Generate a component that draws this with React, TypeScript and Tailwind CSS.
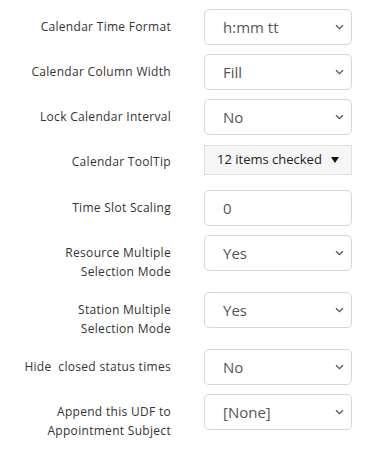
import React from 'react'

type Row = {
  label: string[]
  value: string
  kind: 'select' | 'input' | 'multi'
}

const ROWS: Row[] = [
  { label: ['Calendar Time Format'], value: 'h:mm tt', kind: 'select' },
  { label: ['Calendar Column Width'], value: 'Fill', kind: 'select' },
  { label: ['Lock Calendar Interval'], value: 'No', kind: 'select' },
  { label: ['Calendar ToolTip'], value: '12 items checked', kind: 'multi' },
  { label: ['Time Slot Scaling'], value: '0', kind: 'input' },
  { label: ['Resource Multiple', 'Selection Mode'], value: 'Yes', kind: 'select' },
  { label: ['Station Multiple', 'Selection Mode'], value: 'Yes', kind: 'select' },
  { label: ['Hide  closed status times'], value: 'No', kind: 'select' },
  { label: ['Append this UDF to', 'Appointment Subject'], value: '[None]', kind: 'select' },
]

function Chevron() {
  return (
    <svg width="9" height="6" viewBox="0 0 9 6" className="shrink-0">
      <path d="M1 1.2 L4.5 4.6 L8 1.2" fill="none" stroke="#555" strokeWidth="1.3" />
    </svg>
  )
}

function Control({ row }: { row: Row }) {
  if (row.kind === 'multi') {
    return (
      <div className="h-[37px] pt-px">
        <div className="w-[148px] h-[30px] bg-[#f6f6f6] border border-[#e0e0e0] flex items-center justify-between pl-[12px] pr-[12px]">
          <span className="text-[13px] text-[#222]">{row.value}</span>
          <svg width="8" height="6" viewBox="0 0 8 6">
            <path d="M0 0 H8 L4 6 Z" fill="#111" />
          </svg>
        </div>
      </div>
    )
  }
  return (
    <div className="w-[148px] h-[36px] border border-[#d6d6d6] rounded-[5px] bg-white flex items-center justify-between pl-[18px] pr-[7px]">
      <span className="text-[15px] text-[#555] pt-[1px]">{row.value}</span>
      {row.kind === 'select' && <Chevron />}
    </div>
  )
}

export default function App() {
  return (
    <div className="w-[377px] h-[452px] bg-white pt-[9px]" style={{ fontFamily: '"Open Sans", "Noto Sans", sans-serif' }}>
      {ROWS.map((row, i) => (
        <div key={i} className={`flex ${row.label.length > 1 ? 'mb-[11px]' : 'mb-[9px]'}`}>
          <div className="w-[171px] text-right text-[12px] tracking-[0.3px] leading-[19px] text-[#333] pt-[8px] whitespace-pre">
            {row.label.map(l => (
              <div key={l}>{l}</div>
            ))}
          </div>
          <div className="ml-[33px]">
            <Control row={row} />
          </div>
        </div>
      ))}
    </div>
  )
}
